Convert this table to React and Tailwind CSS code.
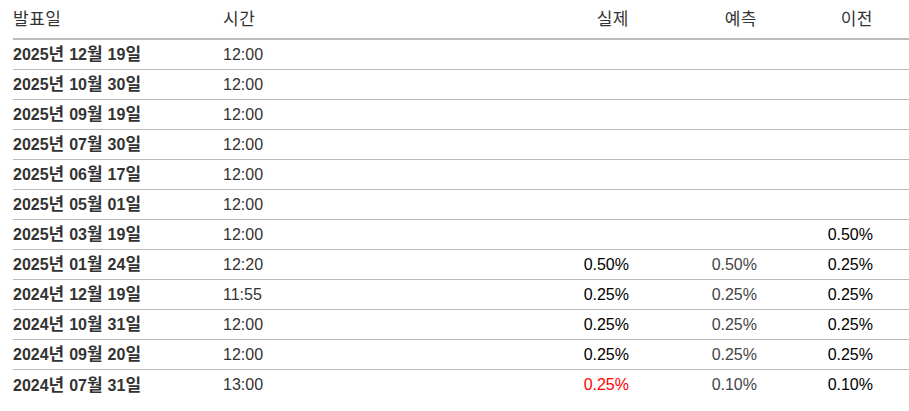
import React from "react";

const rows = [
	{ date: "2025년 12월 19일", time: "12:00", actual: "", forecast: "", previous: "" },
	{ date: "2025년 10월 30일", time: "12:00", actual: "", forecast: "", previous: "" },
	{ date: "2025년 09월 19일", time: "12:00", actual: "", forecast: "", previous: "" },
	{ date: "2025년 07월 30일", time: "12:00", actual: "", forecast: "", previous: "" },
	{ date: "2025년 06월 17일", time: "12:00", actual: "", forecast: "", previous: "" },
	{ date: "2025년 05월 01일", time: "12:00", actual: "", forecast: "", previous: "" },
	{ date: "2025년 03월 19일", time: "12:00", actual: "", forecast: "", previous: "0.50%" },
	{ date: "2025년 01월 24일", time: "12:20", actual: "0.50%", forecast: "0.50%", previous: "0.25%" },
	{ date: "2024년 12월 19일", time: "11:55", actual: "0.25%", forecast: "0.25%", previous: "0.25%" },
	{ date: "2024년 10월 31일", time: "12:00", actual: "0.25%", forecast: "0.25%", previous: "0.25%" },
	{ date: "2024년 09월 20일", time: "12:00", actual: "0.25%", forecast: "0.25%", previous: "0.25%" },
	{ date: "2024년 07월 31일", time: "13:00", actual: "0.25%", forecast: "0.10%", previous: "0.10%", up: true },
];

const gridCols = "grid grid-cols-[210px_250px_156px_128px_116px_1fr] items-center";

// hangul glyphs render a bit narrower than in the reference, so bump them slightly
const Ko = ({ text }) =>
	text.split(/([\uAC00-\uD7A3]+)/).map((part, i) =>
		/[\uAC00-\uD7A3]/.test(part) ? (
			<span key={i} className="text-[17px] tracking-[0.5px]">
				{part}
			</span>
		) : (
			part
		)
	);

const App = () => {
	return (
		<div className="bg-white w-[909px] h-[411px] pl-[13px] font-['Liberation_Sans','Noto_Sans_CJK_KR',sans-serif] text-[16px] leading-none">
			<div className={`${gridCols} h-[40px] border-b-2 border-[#bbbbbb] text-[#333]`}>
				<div><Ko text="발표일" /></div>
				<div><Ko text="시간" /></div>
				<div className="text-right"><Ko text="실제" /></div>
				<div className="text-right"><Ko text="예측" /></div>
				<div className="text-right"><Ko text="이전" /></div>
				<div />
			</div>
			{rows.map((row, i) => (
				<div
					key={row.date}
					className={`${gridCols} h-[30px] ${i < rows.length - 1 ? "border-b border-[#bbbbbb]" : ""}`}
				>
					<div className="font-bold text-[#333]"><Ko text={row.date} /></div>
					<div className="text-[#333]">{row.time}</div>
					<div className={`text-right ${row.up ? "text-[#ff0000]" : "text-black"}`}>{row.actual}</div>
					<div className="text-right text-[#444]">{row.forecast}</div>
					<div className="text-right text-black">{row.previous}</div>
					<div />
				</div>
			))}
		</div>
	);
};

export default App;
